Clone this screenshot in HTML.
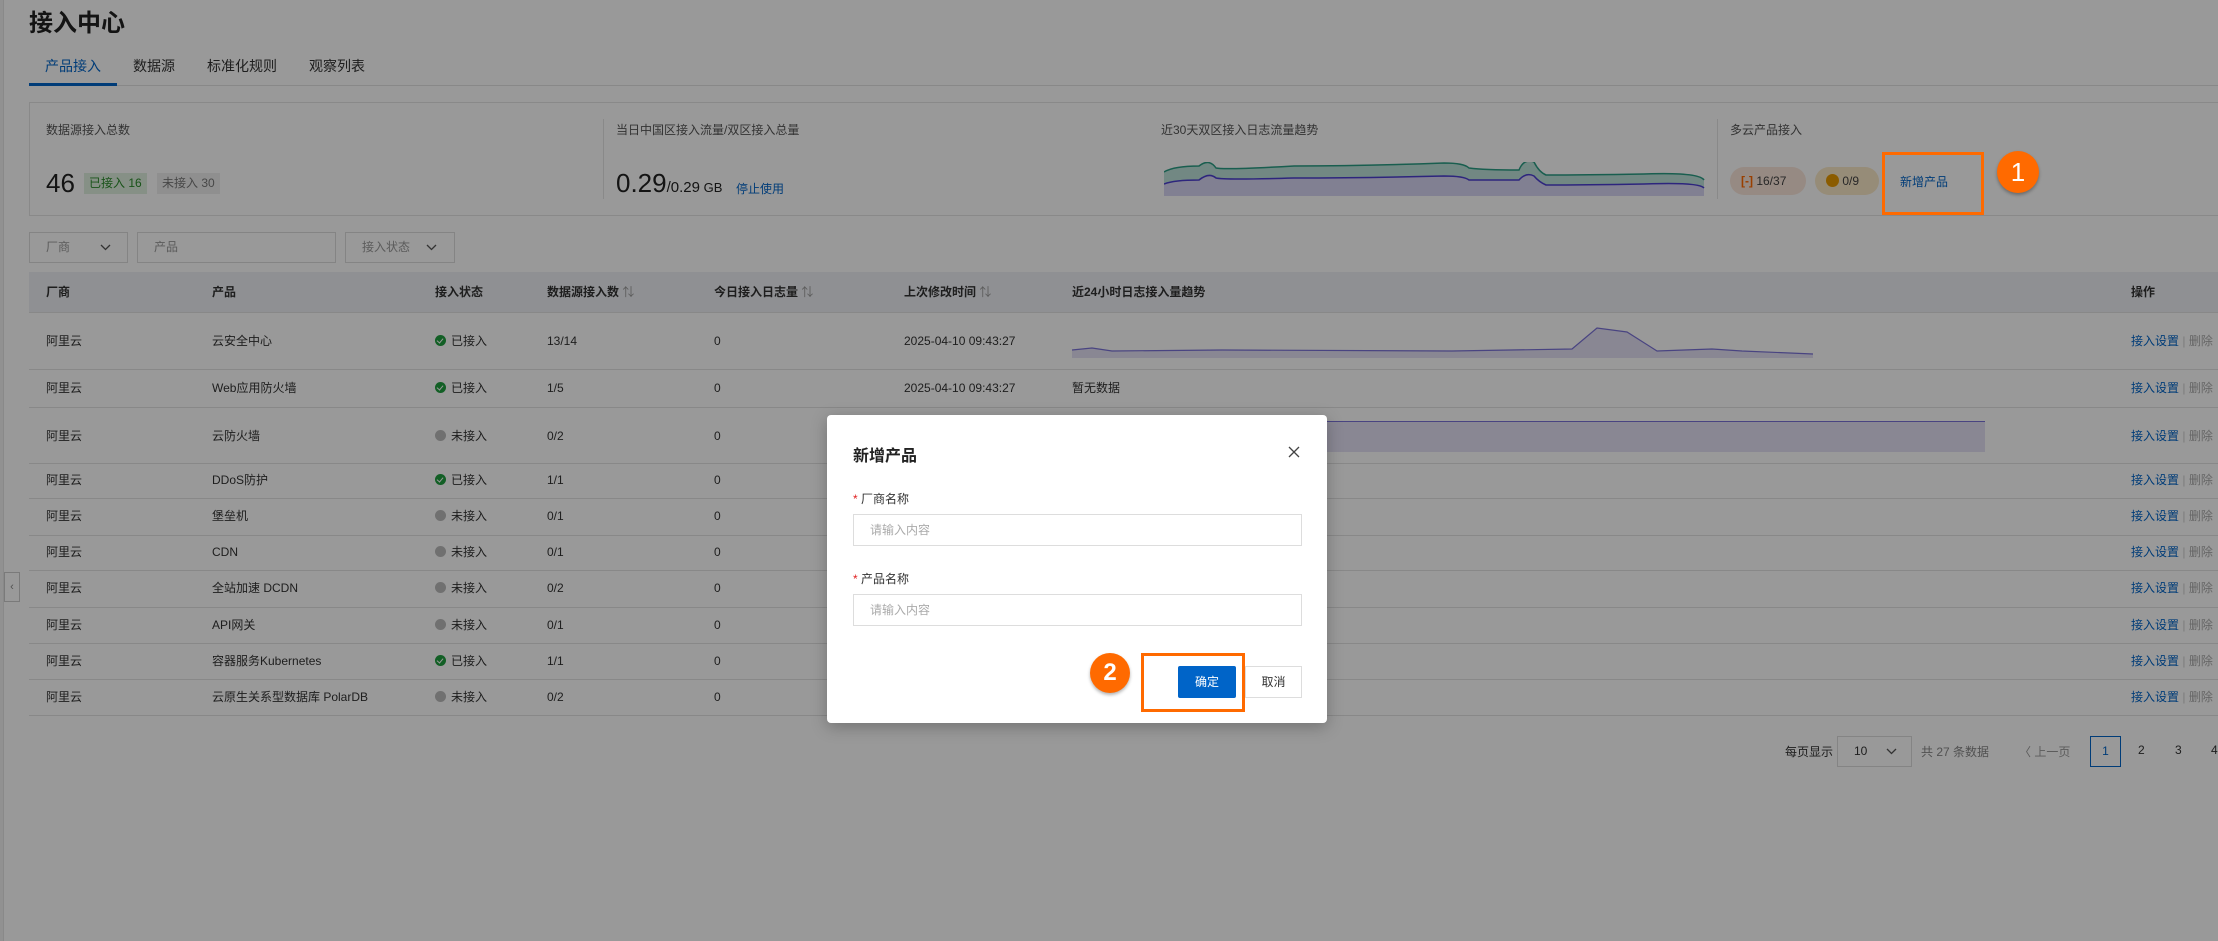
<!DOCTYPE html>
<html><head><meta charset="utf-8">
<style>
*{margin:0;padding:0;box-sizing:border-box}
body{width:2218px;height:941px;overflow:hidden;background:#fff;font-family:"Liberation Sans","Noto Sans CJK SC",sans-serif;color:#333;font-size:12px;position:relative}
.a{position:absolute;white-space:nowrap}
.cell,.hdr{line-height:17px}
.ov{position:absolute;left:0;top:0;width:2218px;height:941px;background:rgba(0,0,0,0.4);z-index:10}
.hdr{font-weight:600;color:#333}
.cell{color:#333}
.link{color:#0064c8}
.line{position:absolute;left:29px;width:2189px;height:1px;background:#e3e3e3}
.dot{display:inline-block;width:11px;height:11px;border-radius:50%;vertical-align:-1px;margin-right:5px}
.ok{background:#1e9e3e;position:relative}
.ok:after{content:"";position:absolute;left:3px;top:2px;width:3px;height:5px;border:solid #fff;border-width:0 1.5px 1.5px 0;transform:rotate(40deg)}
.no{background:#bbb}
.z{z-index:20}
.chev{position:absolute;top:11px}
</style></head><body>

<div class="a" style="left:29px;top:3px;font-size:24px;font-weight:600;color:#222">接入中心</div>
<div class="a" style="left:45px;top:56px;font-size:14px;color:#0064c8">产品接入</div>
<div class="a" style="left:133px;top:56px;font-size:14px;color:#333">数据源</div>
<div class="a" style="left:207px;top:56px;font-size:14px;color:#333">标准化规则</div>
<div class="a" style="left:309px;top:56px;font-size:14px;color:#333">观察列表</div>
<div class="a" style="left:29px;top:85px;width:2189px;height:1px;background:#e3e3e3"></div>
<div class="a" style="left:29px;top:83px;width:88px;height:3px;background:#0064c8"></div>

<div class="a" style="left:29px;top:102px;width:2200px;height:114px;border:1px solid #e5e5e5;background:#fff"></div>
<div class="a" style="left:603px;top:119px;width:1px;height:80px;background:#e5e5e5"></div>
<div class="a" style="left:1717px;top:119px;width:1px;height:80px;background:#e5e5e5"></div>
<div class="a" style="left:46px;top:121px;color:#555">数据源接入总数</div>
<div class="a" style="left:46px;top:168px;font-size:26px;color:#222">46</div>
<div class="a" style="left:84px;top:173px;height:21px;padding:0 5px;line-height:21px;background:#dff1df;color:#2a8a2a;font-size:12px">已接入 16</div>
<div class="a" style="left:157px;top:173px;height:21px;padding:0 5px;line-height:21px;background:#efefef;color:#777;font-size:12px">未接入 30</div>
<div class="a" style="left:616px;top:121px;color:#555">当日中国区接入流量/双区接入总量</div>
<div class="a" style="left:616px;top:168px;font-size:26px;color:#222">0.29<span style="font-size:15px">/0.29</span><span style="font-size:13px"> GB</span></div>
<div class="a link" style="left:736px;top:180px;font-size:12px">停止使用</div>
<div class="a" style="left:1161px;top:121px;color:#555">近30天双区接入日志流量趋势</div>
<svg class="a" style="left:1164px;top:162px" width="542" height="36" viewBox="0 0 542 36">
<path d="M0 10 Q10 4 35 4 Q45 -4 52 6 Q60 8 130 4 Q200 4 280 1 Q300 1 305 6 Q320 8 355 8 Q360 -4 370 0 Q375 10 382 13 Q420 13 480 12 Q535 10 540 18 L540 34 L0 34Z" fill="#bfe3da"/>
<path d="M0 10 Q10 4 35 4 Q45 -4 52 6 Q60 8 130 4 Q200 4 280 1 Q300 1 305 6 Q320 8 355 8 Q360 -4 370 0 Q375 10 382 13 Q420 13 480 12 Q535 10 540 18" fill="none" stroke="#2a9d84" stroke-width="1.5"/>
<path d="M0 22 Q10 18 35 18 Q45 10 52 16 Q60 18 130 16 Q200 16 280 14 Q300 14 305 18 Q320 18 355 18 Q362 10 370 14 Q375 20 382 23 Q420 23 480 22 Q535 20 540 26 L540 34 L0 34Z" fill="#d8d6f3"/>
<path d="M0 22 Q10 18 35 18 Q45 10 52 16 Q60 18 130 16 Q200 16 280 14 Q300 14 305 18 Q320 18 355 18 Q362 10 370 14 Q375 20 382 23 Q420 23 480 22 Q535 20 540 26" fill="none" stroke="#4b3fd0" stroke-width="1.5"/>
</svg>
<div class="a" style="left:1730px;top:121px;color:#555">多云产品接入</div>
<div class="a" style="left:1730px;top:167px;width:76px;height:28px;border-radius:14px;background:#fbe6da;line-height:28px;padding-left:11px;color:#444"><span style="color:#ff6a00;font-weight:bold">[-]</span> 16/37</div>
<div class="a" style="left:1815px;top:167px;width:64px;height:28px;border-radius:14px;background:#fbe9c8;line-height:28px;padding-left:11px;color:#444"><span style="display:inline-block;width:13px;height:13px;border-radius:50%;background:#e89a00;vertical-align:-2px"></span> 0/9</div>
<div class="a link" style="left:1900px;top:173px">新增产品</div>

<div class="a" style="left:29px;top:232px;width:99px;height:31px;border:1px solid #ddd;line-height:29px;padding-left:16px;color:#999">厂商<svg class="chev" style="left:70px" width="11" height="7" viewBox="0 0 11 7"><path d="M1 1L5.5 5.5L10 1" fill="none" stroke="#555" stroke-width="1.3"/></svg></div>
<div class="a" style="left:137px;top:232px;width:199px;height:31px;border:1px solid #ddd;line-height:29px;padding-left:16px;color:#999">产品</div>
<div class="a" style="left:345px;top:232px;width:110px;height:31px;border:1px solid #ddd;line-height:29px;padding-left:16px;color:#999">接入状态<svg class="chev" style="left:80px" width="11" height="7" viewBox="0 0 11 7"><path d="M1 1L5.5 5.5L10 1" fill="none" stroke="#555" stroke-width="1.3"/></svg></div>

<div class="a" style="left:29px;top:272px;width:2189px;height:40px;background:#eef0f5"></div>
<div class="a hdr" style="left:46px;top:284px">厂商</div>
<div class="a hdr" style="left:212px;top:284px">产品</div>
<div class="a hdr" style="left:435px;top:284px">接入状态</div>
<div class="a hdr" style="left:547px;top:284px">数据源接入数 <span style="color:#999;font-weight:normal">⇅</span></div>
<div class="a hdr" style="left:714px;top:284px">今日接入日志量 <span style="color:#999;font-weight:normal">⇅</span></div>
<div class="a hdr" style="left:904px;top:284px">上次修改时间 <span style="color:#999;font-weight:normal">⇅</span></div>
<div class="a hdr" style="left:1072px;top:284px">近24小时日志接入量趋势</div>
<div class="a hdr" style="left:2131px;top:284px">操作</div>

<div class="line" style="top:312px"></div>
<div class="line" style="top:369px"></div>
<div class="line" style="top:407px"></div>
<div class="line" style="top:463px"></div>
<div class="line" style="top:498px"></div>
<div class="line" style="top:535px"></div>
<div class="line" style="top:570px"></div>
<div class="line" style="top:607px"></div>
<div class="line" style="top:643px"></div>
<div class="line" style="top:679px"></div>
<div class="line" style="top:715px"></div>

<svg class="a" style="left:1072px;top:320px" width="742" height="40" viewBox="0 0 742 40">
<path d="M0 30 L20 28 L40 31 L150 30 L380 31 L500 29 L525 8 L555 12 L585 31 L640 29 L670 31 L741 34 L741 38 L0 38Z" fill="#e4e2f6"/>
<path d="M0 30 L20 28 L40 31 L150 30 L380 31 L500 29 L525 8 L555 12 L585 31 L640 29 L670 31 L741 34" fill="none" stroke="#7b72d8" stroke-width="1.2"/>
</svg>
<div class="a" style="left:1072px;top:421px;width:913px;height:31px;background:#e4e2f6;border-top:1.5px solid #7b72d8"></div>

<div class="a cell" style="left:46px;top:333px">阿里云</div><div class="a cell" style="left:212px;top:333px">云安全中心</div><div class="a cell" style="left:435px;top:333px"><span class="dot ok"></span>已接入</div><div class="a cell" style="left:547px;top:333px">13/14</div><div class="a cell" style="left:714px;top:333px">0</div><div class="a cell" style="left:904px;top:333px">2025-04-10 09:43:27</div>
<div class="a cell" style="left:46px;top:380px">阿里云</div><div class="a cell" style="left:212px;top:380px">Web应用防火墙</div><div class="a cell" style="left:435px;top:380px"><span class="dot ok"></span>已接入</div><div class="a cell" style="left:547px;top:380px">1/5</div><div class="a cell" style="left:714px;top:380px">0</div><div class="a cell" style="left:904px;top:380px">2025-04-10 09:43:27</div><div class="a cell" style="left:1072px;top:380px">暂无数据</div>
<div class="a cell" style="left:46px;top:428px">阿里云</div><div class="a cell" style="left:212px;top:428px">云防火墙</div><div class="a cell" style="left:435px;top:428px"><span class="dot no"></span>未接入</div><div class="a cell" style="left:547px;top:428px">0/2</div><div class="a cell" style="left:714px;top:428px">0</div>
<div class="a cell" style="left:46px;top:472px">阿里云</div><div class="a cell" style="left:212px;top:472px">DDoS防护</div><div class="a cell" style="left:435px;top:472px"><span class="dot ok"></span>已接入</div><div class="a cell" style="left:547px;top:472px">1/1</div><div class="a cell" style="left:714px;top:472px">0</div>
<div class="a cell" style="left:46px;top:508px">阿里云</div><div class="a cell" style="left:212px;top:508px">堡垒机</div><div class="a cell" style="left:435px;top:508px"><span class="dot no"></span>未接入</div><div class="a cell" style="left:547px;top:508px">0/1</div><div class="a cell" style="left:714px;top:508px">0</div>
<div class="a cell" style="left:46px;top:544px">阿里云</div><div class="a cell" style="left:212px;top:544px">CDN</div><div class="a cell" style="left:435px;top:544px"><span class="dot no"></span>未接入</div><div class="a cell" style="left:547px;top:544px">0/1</div><div class="a cell" style="left:714px;top:544px">0</div>
<div class="a cell" style="left:46px;top:580px">阿里云</div><div class="a cell" style="left:212px;top:580px">全站加速 DCDN</div><div class="a cell" style="left:435px;top:580px"><span class="dot no"></span>未接入</div><div class="a cell" style="left:547px;top:580px">0/2</div><div class="a cell" style="left:714px;top:580px">0</div>
<div class="a cell" style="left:46px;top:617px">阿里云</div><div class="a cell" style="left:212px;top:617px">API网关</div><div class="a cell" style="left:435px;top:617px"><span class="dot no"></span>未接入</div><div class="a cell" style="left:547px;top:617px">0/1</div><div class="a cell" style="left:714px;top:617px">0</div>
<div class="a cell" style="left:46px;top:653px">阿里云</div><div class="a cell" style="left:212px;top:653px">容器服务Kubernetes</div><div class="a cell" style="left:435px;top:653px"><span class="dot ok"></span>已接入</div><div class="a cell" style="left:547px;top:653px">1/1</div><div class="a cell" style="left:714px;top:653px">0</div>
<div class="a cell" style="left:46px;top:689px">阿里云</div><div class="a cell" style="left:212px;top:689px">云原生关系型数据库 PolarDB</div><div class="a cell" style="left:435px;top:689px"><span class="dot no"></span>未接入</div><div class="a cell" style="left:547px;top:689px">0/2</div><div class="a cell" style="left:714px;top:689px">0</div>

<div class="a cell" style="left:2131px;top:333px"><span class="link">接入设置</span><span style="color:#ccc"> | </span><span style="color:#aaa">删除</span></div>
<div class="a cell" style="left:2131px;top:380px"><span class="link">接入设置</span><span style="color:#ccc"> | </span><span style="color:#aaa">删除</span></div>
<div class="a cell" style="left:2131px;top:428px"><span class="link">接入设置</span><span style="color:#ccc"> | </span><span style="color:#aaa">删除</span></div>
<div class="a cell" style="left:2131px;top:472px"><span class="link">接入设置</span><span style="color:#ccc"> | </span><span style="color:#aaa">删除</span></div>
<div class="a cell" style="left:2131px;top:508px"><span class="link">接入设置</span><span style="color:#ccc"> | </span><span style="color:#aaa">删除</span></div>
<div class="a cell" style="left:2131px;top:544px"><span class="link">接入设置</span><span style="color:#ccc"> | </span><span style="color:#aaa">删除</span></div>
<div class="a cell" style="left:2131px;top:580px"><span class="link">接入设置</span><span style="color:#ccc"> | </span><span style="color:#aaa">删除</span></div>
<div class="a cell" style="left:2131px;top:617px"><span class="link">接入设置</span><span style="color:#ccc"> | </span><span style="color:#aaa">删除</span></div>
<div class="a cell" style="left:2131px;top:653px"><span class="link">接入设置</span><span style="color:#ccc"> | </span><span style="color:#aaa">删除</span></div>
<div class="a cell" style="left:2131px;top:689px"><span class="link">接入设置</span><span style="color:#ccc"> | </span><span style="color:#aaa">删除</span></div>

<div class="a" style="left:1785px;top:743px;color:#333">每页显示</div>
<div class="a" style="left:1837px;top:736px;width:75px;height:31px;border:1px solid #ddd;line-height:29px;padding-left:16px;color:#333">10<svg class="chev" style="left:48px" width="11" height="7" viewBox="0 0 11 7"><path d="M1 1L5.5 5.5L10 1" fill="none" stroke="#555" stroke-width="1.3"/></svg></div>
<div class="a" style="left:1921px;top:743px;color:#888">共 27 条数据</div>
<div class="a" style="left:2019px;top:743px;color:#999">〈 上一页</div>
<div class="a" style="left:2090px;top:736px;width:31px;height:31px;border:1px solid #0064c8;line-height:29px;text-align:center;color:#0064c8">1</div>
<div class="a" style="left:2138px;top:743px;color:#333">2</div>
<div class="a" style="left:2175px;top:743px;color:#333">3</div>
<div class="a" style="left:2211px;top:743px;color:#333">4</div>

<div class="a" style="left:0;top:0;width:4px;height:941px;background:#f2f2f2;border-right:1px solid #e5e5e5"></div>
<div class="a" style="left:4px;top:572px;width:16px;height:30px;border:1px solid #ccc;background:#fff;color:#888;font-size:11px;line-height:28px;text-align:center">&lsaquo;</div>

<div class="ov"></div>

<div class="a z" style="left:1882px;top:152px;width:102px;height:63px;border:3px solid #ff6a00"></div>
<div class="a z" style="left:1997px;top:151px;width:42px;height:42px;border-radius:50%;background:#ff6a00;color:#fff;font-size:26px;line-height:42px;text-align:center;box-shadow:0 2px 3px rgba(0,0,0,.3)">1</div>

<div class="a z" style="left:827px;top:415px;width:500px;height:308px;background:#fff;border-radius:4px;box-shadow:0 4px 16px rgba(0,0,0,.25)">
  <div class="a" style="left:26px;top:27px;font-size:16px;font-weight:600;color:#222">新增产品</div>
  <svg class="a" style="left:461px;top:31px" width="12" height="12" viewBox="0 0 12 12"><path d="M1 1L11 11M11 1L1 11" stroke="#444" stroke-width="1.3"/></svg>
  <div class="a" style="left:26px;top:75px;font-size:12px;color:#333"><span style="color:#e02020">*</span> 厂商名称</div>
  <div class="a" style="left:26px;top:99px;width:449px;height:32px;border:1px solid #ddd;line-height:30px;padding-left:16px;color:#aaa">请输入内容</div>
  <div class="a" style="left:26px;top:155px;font-size:12px;color:#333"><span style="color:#e02020">*</span> 产品名称</div>
  <div class="a" style="left:26px;top:179px;width:449px;height:32px;border:1px solid #ddd;line-height:30px;padding-left:16px;color:#aaa">请输入内容</div>
  <div class="a" style="left:351px;top:251px;width:58px;height:32px;background:#0064c8;border-radius:2px;color:#fff;line-height:32px;text-align:center">确定</div>
  <div class="a" style="left:418px;top:251px;width:57px;height:32px;border:1px solid #ddd;color:#333;line-height:30px;text-align:center">取消</div>
</div>
<div class="a z" style="left:1141px;top:653px;width:104px;height:59px;border:3px solid #ff6a00"></div>
<div class="a z" style="left:1090px;top:653px;width:40px;height:40px;border-radius:50%;background:#ff6a00;color:#fff;font-size:24px;font-weight:bold;line-height:40px;text-align:center;box-shadow:0 2px 3px rgba(0,0,0,.3)">2</div>

</body></html>
